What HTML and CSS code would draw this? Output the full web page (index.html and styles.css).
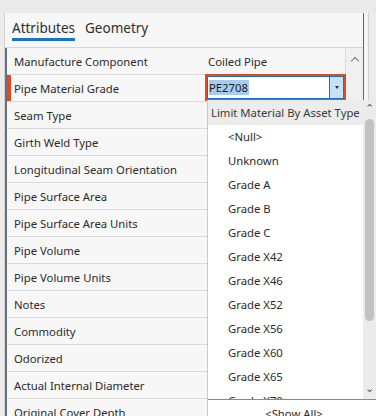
FILE: index.html
```html
<!DOCTYPE html>
<html>
<head>
<meta charset="utf-8">
<link rel="stylesheet" href="styles.css">
</head>
<body>
<div class="screen">
  <div class="topband"></div>
  <div class="main">
    <div class="gutter"></div>
    <div class="panel">
      <div class="tabs">
        <span class="tab active">Attributes</span>
        <span class="tab">Geometry</span>
      </div>
      <div class="gridwrap">
        <div class="grid">
          <div class="row"><div class="label">Manufacture Component</div><div class="value">Coiled Pipe</div></div>
          <div class="row current"><div class="label">Pipe Material Grade</div><div class="value"></div></div>
          <div class="row"><div class="label">Seam Type</div><div class="value"></div></div>
          <div class="row"><div class="label">Girth Weld Type</div><div class="value"></div></div>
          <div class="row"><div class="label">Longitudinal Seam Orientation</div><div class="value"></div></div>
          <div class="row"><div class="label">Pipe Surface Area</div><div class="value"></div></div>
          <div class="row"><div class="label">Pipe Surface Area Units</div><div class="value"></div></div>
          <div class="row"><div class="label">Pipe Volume</div><div class="value"></div></div>
          <div class="row"><div class="label">Pipe Volume Units</div><div class="value"></div></div>
          <div class="row"><div class="label">Notes</div><div class="value"></div></div>
          <div class="row"><div class="label">Commodity</div><div class="value"></div></div>
          <div class="row"><div class="label">Odorized</div><div class="value"></div></div>
          <div class="row"><div class="label">Actual Internal Diameter</div><div class="value"></div></div>
          <div class="row"><div class="label">Original Cover Depth</div><div class="value"></div></div>
        </div>
        <div class="gridscroll"><span class="arrow up"></span></div>
      </div>
    </div>
    <div class="rightstrip"></div>
  </div>

  <div class="editor">
    <div class="input"><span class="sel">PE2708</span></div>
    <div class="dropbtn"><span class="tri"></span></div>
  </div>

  <div class="dropdown">
    <div class="ddbody">
      <div class="ddheader">Limit Material By Asset Type</div>
      <div class="ddlist">
        <div class="item">&lt;Null&gt;</div>
        <div class="item">Unknown</div>
        <div class="item">Grade A</div>
        <div class="item">Grade B</div>
        <div class="item">Grade C</div>
        <div class="item">Grade X42</div>
        <div class="item">Grade X46</div>
        <div class="item">Grade X52</div>
        <div class="item">Grade X56</div>
        <div class="item">Grade X60</div>
        <div class="item">Grade X65</div>
        <div class="item">Grade X70</div>
      </div>
    </div>
    <div class="ddscroll">
      <span class="sarrow">&#8963;</span>
      <div class="thumb"></div>
      <span class="sarrow down">&#8964;</span>
    </div>
    <div class="ddfooter">&lt;Show All&gt;</div>
  </div>
</div>
</body>
</html>
```

FILE: styles.css
```css
html, body {
  margin: 0;
  padding: 0;
}
body {
  width: 376px;
  height: 416px;
  overflow: hidden;
  background: #f3f3f3;
  font-family: "Noto Sans", "Open Sans", sans-serif;
  color: #2b2b2b;
}
.screen {
  position: relative;
  width: 376px;
  height: 416px;
  overflow: hidden;
  display: flex;
  flex-direction: column;
}
.topband {
  height: 13px;
  flex: none;
  background: repeating-conic-gradient(#e2e2e2 0 25%, #f3f3f3 0 50%) 0 0 / 2px 2px;
}
.main {
  flex: 1;
  display: flex;
}
.gutter {
  width: 4px;
  flex: none;
  border-right: 1px solid #d2d2d2;
  background: repeating-conic-gradient(#e6e6e6 0 25%, #f3f3f3 0 50%) 0 0 / 2px 2px;
}
.panel {
  width: 358px;
  flex: none;
  border-right: 1px solid #1a78d2;
  background: #f7f7f7;
  display: flex;
  flex-direction: column;
}
.rightstrip {
  flex: 1;
  border-left: 4px solid #f5f5f5;
  box-shadow: inset 1px 0 0 #cfcfcf;
  background: #ececec;
}
.tabs {
  height: 35px;
  flex: none;
  display: flex;
  align-items: flex-start;
  gap: 10px;
  padding-left: 7px;
  box-sizing: border-box;
  padding-top: 6px;
  border-bottom: 1px solid #d6d6d6;
}
.tab {
  font-size: 13.5px;
  line-height: 18px;
  padding-bottom: 1px;
  color: #2e2e2e;
}
.tab.active {
  border-bottom: 3px solid #1a73c8;
}
.gridwrap {
  flex: 1;
  display: flex;
}
.grid {
  flex: 1;
  display: flex;
  flex-direction: column;
  border-left: 2px solid #65727e;
}
.row {
  height: 27px;
  box-sizing: border-box;
  flex: none;
  display: flex;
  border-bottom: 1px solid #d9d9d9;
  font-size: 11.3px;
  padding-top: 2px;
  line-height: 24px;
}
.row.current {
  box-shadow: inset 4px 0 0 #e5461e;
}
.label {
  width: 199px;
  padding-left: 7px;
  box-sizing: border-box;
  white-space: nowrap;
}
.value {
  flex: 1;
  padding-left: 2px;
  white-space: nowrap;
}
.gridscroll {
  width: 17px;
  flex: none;
  border-left: 1px solid #d9d9d9;
  background: #f0f0f0;
}
.arrow.up {
  display: block;
  width: 5px;
  height: 5px;
  border-left: 1px solid #7a7a7a;
  border-top: 1px solid #7a7a7a;
  transform: rotate(45deg);
  margin: 10px auto 0;
}

.editor {
  position: absolute;
  left: 205px;
  top: 74px;
  width: 141px;
  height: 27px;
  box-sizing: border-box;
  border: 2px solid #e4481e;
  display: flex;
  background: #fff;
}
.input {
  flex: 1;
  border: 1px solid #1a73c8;
  border-right: none;
  background: #fff;
  font-size: 11.3px;
  line-height: 17px;
  padding: 2px 0 0 1px;
}
.sel {
  background: #a6cdf1;
  color: #1b1b1b;
  padding-right: 1px;
}
.dropbtn {
  width: 13px;
  border: 1px solid #1a73c8;
  background: #c5e3f8;
  display: flex;
  align-items: center;
  justify-content: center;
}
.tri {
  width: 0;
  height: 0;
  border-left: 2.5px solid transparent;
  border-right: 2.5px solid transparent;
  border-top: 3px solid #333;
}

.dropdown {
  position: absolute;
  left: 207px;
  top: 100px;
  width: 169px;
  height: 316px;
  background: #fff;
  border-left: 1px solid #c8c8c8;
  box-sizing: border-box;
  display: grid;
  grid-template-columns: 1fr 13px;
  grid-template-rows: 299px 1fr;
  font-size: 11.3px;
}
.ddbody {
  overflow: hidden;
  display: flex;
  flex-direction: column;
}
.ddheader {
  height: 25px;
  flex: none;
  background: #ececec;
  line-height: 25px;
  padding-left: 3px;
  color: #3a3a3a;
  white-space: nowrap;
}
.ddlist {
  flex: 1;
  overflow: hidden;
}
.item {
  height: 24px;
  line-height: 24px;
  padding-left: 20px;
  color: #2b2b2b;
}
.ddscroll {
  background: repeating-conic-gradient(#e3e3e3 0 25%, #f4f4f4 0 50%) 0 0 / 2px 2px;
  display: flex;
  flex-direction: column;
  align-items: center;
}
.sarrow {
  height: 14px;
  font-size: 11px;
  line-height: 16px;
  color: #555;
}
.sarrow.down {
  margin-top: auto;
  line-height: 6px;
}
.thumb {
  margin-top: 5px;
  width: 9px;
  height: 202px;
  border-radius: 5px;
  background: #c2c2c2;
}
.ddfooter {
  grid-column: 1 / 3;
  border-top: 1px solid #8a8a8a;
  text-align: center;
  line-height: 24px;
  padding-top: 2px;
  padding-left: 4px;
  color: #2b2b2b;
}
```
